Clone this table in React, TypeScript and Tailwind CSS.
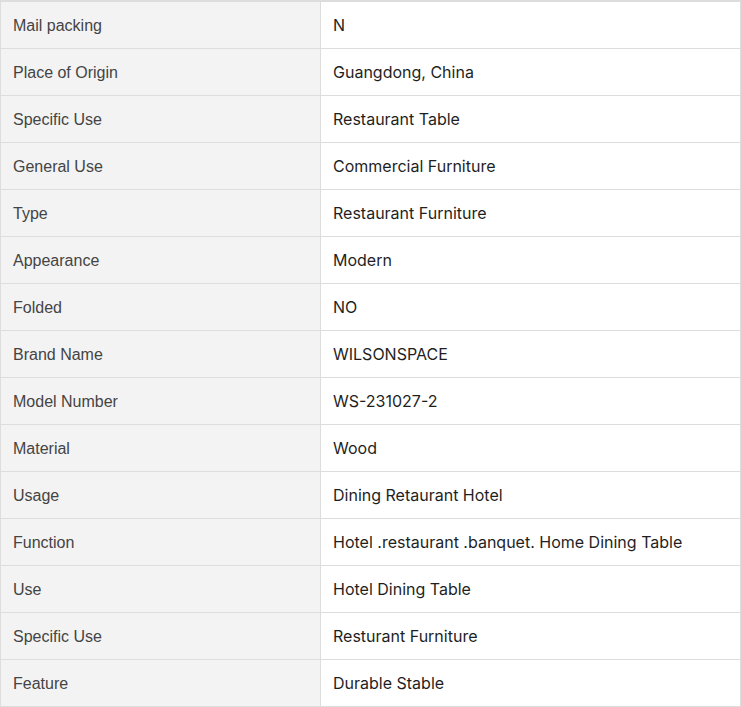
const rows: [string, string][] = [
  ['Mail packing', 'N'],
  ['Place of Origin', 'Guangdong, China'],
  ['Specific Use', 'Restaurant Table'],
  ['General Use', 'Commercial Furniture'],
  ['Type', 'Restaurant Furniture'],
  ['Appearance', 'Modern'],
  ['Folded', 'NO'],
  ['Brand Name', 'WILSONSPACE'],
  ['Model Number', 'WS-231027-2'],
  ['Material', 'Wood'],
  ['Usage', 'Dining Retaurant Hotel'],
  ['Function', 'Hotel .restaurant .banquet. Home Dining Table'],
  ['Use', 'Hotel Dining Table'],
  ['Specific Use', 'Resturant Furniture'],
  ['Feature', 'Durable Stable'],
];

export default function App() {
  return (
    <div className="w-[741px] bg-white border-t border-[#dddddd]">
      <table className="w-full border-collapse table-fixed">
        <colgroup>
          <col className="w-[320px]" />
          <col />
        </colgroup>
        <tbody>
          {rows.map(([label, value], i) => (
            <tr key={i} className="h-[47px]">
              <td className="border border-[#dddddd] bg-[#f3f3f3] px-3 pt-[2px] font-['Liberation_Sans',Arial,sans-serif] text-[16px] text-[#444444] align-middle">
                {label}
              </td>
              <td className="border border-[#dddddd] bg-white px-3 font-['Inter',sans-serif] text-[16px] text-[#1f1f1f] align-middle">
                {value}
              </td>
            </tr>
          ))}
        </tbody>
      </table>
    </div>
  );
}
